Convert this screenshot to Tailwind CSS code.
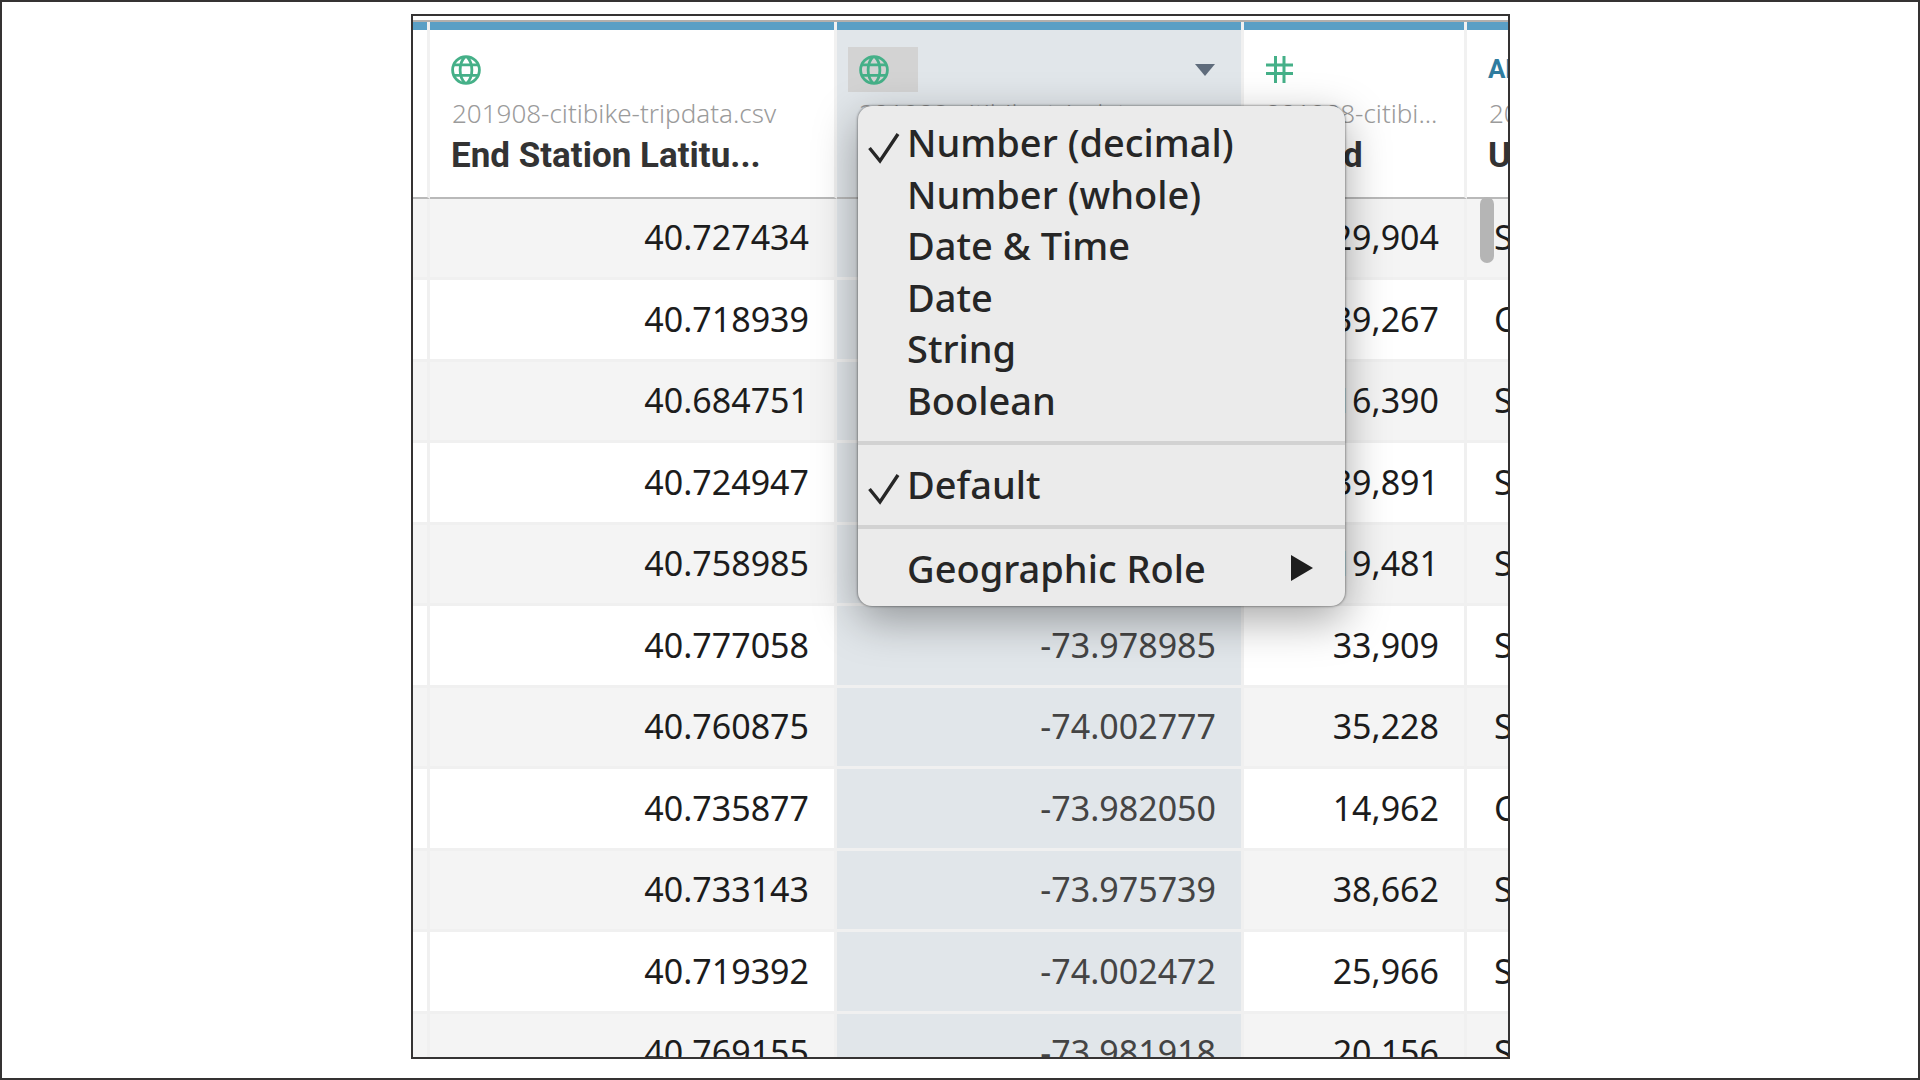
<!DOCTYPE html>
<html lang="en">
<head>
<meta charset="utf-8">
<title>Citi Bike trip data</title>
<script src="https://cdn.jsdelivr.net/npm/@tailwindcss/browser@4"></script>
</head>
<body class="bg-white font-['Noto_Sans',sans-serif] text-[#1c1c1c]">
<svg class="hidden" aria-hidden="true">
  <symbol id="globe" viewBox="0 0 30 30">
    <g fill="none" stroke="#45b088" stroke-width="2.8">
      <circle cx="15" cy="15" r="13.4"/>
      <path d="M2.5 9.800h25M2.5 20.400h25M14 2C7.500 8 7.500 22 14 28M16 2c6.500 6 6.500 20 0 26"/>
    </g>
  </symbol>
  <symbol id="check" viewBox="0 0 32 32">
    <path d="M1.500 16 12 29 30 2" fill="none" stroke="#262626" stroke-width="3.4"/>
  </symbol>
</svg>
<main class="flex h-screen justify-center border-2 border-[#353333] pt-3 pb-[19px] pl-px">
  <section class="relative w-full max-w-[1099px] overflow-hidden border-2 border-[#353333] pt-1">
    <table class="w-[1267px] table-fixed border-separate border-spacing-0 border-t-2 border-[#b3afac]">
      <colgroup>
        <col class="w-[17px]"><col class="w-[407px]"><col class="w-[407px]"><col class="w-[223px]"><col class="w-[213px]">
      </colgroup>
      <thead class="text-left [&_th]:h-[177px] [&_th]:border-b-2 [&_th]:border-b-[#b9b9b9] [&_th]:p-0 [&_th]:align-top">
        <tr>
          <td class="border-r-3 border-b-2 border-r-[#f1f1f1] border-b-[#b9b9b9] p-0 align-top"><div class="h-2 bg-[#5a9fc5]"></div></td>
          <th scope="col" class="border-r-3 border-r-[#f1f1f1]">
            <div class="h-2 bg-[#5a9fc5]"></div>
            <div class="mt-[17px] flex h-[45px] items-center pl-[21px]"><svg class="size-[30px]"><use href="#globe"/></svg></div>
            <div class="mt-1.5 pl-[22px] text-[26px] leading-[30px] font-light text-[#9b9b9b]">201908-citibike-tripdata.csv</div>
            <div class="mt-2 pl-[21px] font-['Roboto',sans-serif] text-[35px] leading-[40px] font-bold text-[#333]">End Station Latitu...</div>
          </th>
          <th scope="col" class="border-r-3 border-r-[#f1f1f1] bg-[#e1e6ea]">
            <div class="h-2 bg-[#5a9fc5]"></div>
            <div class="mt-[17px] flex h-[45px] items-center justify-between pr-[26px] pl-[11px]">
              <button type="button" aria-label="Change data type" class="flex h-[45px] w-[70px] items-center bg-[#d3d3d3] pl-[11px]"><svg class="size-[30px]"><use href="#globe"/></svg></button>
              <button type="button" aria-label="Column menu"><svg class="h-3 w-5" viewBox="0 0 20 12"><path d="M0 0h20L10 12z" fill="#5f6c7c"/></svg></button>
            </div>
            <div class="mt-1.5 pl-[22px] text-[26px] leading-[30px] font-light text-[#9b9b9b]">201908-citibike-tripdata.csv</div>
          </th>
          <th scope="col" class="border-r-3 border-r-[#f1f1f1]">
            <div class="h-2 bg-[#5a9fc5]"></div>
            <div class="mt-[17px] flex h-[45px] items-center pl-[22px]"><svg class="size-7" viewBox="0 0 28 28"><path d="M9.500 0v27M18 0v27M0 9h27M0 17.500h27" stroke="#45b088" stroke-width="3"/></svg></div>
            <div class="mt-1.5 pl-[22px] text-[26px] leading-[30px] font-light text-[#9b9b9b]">201908-citibi...</div>
            <div class="mt-2 pl-[21px] font-['Roboto',sans-serif] text-[35px] leading-[40px] font-bold text-[#333]">Bikeid</div>
          </th>
          <th scope="col">
            <div class="h-2 bg-[#5a9fc5]"></div>
            <div class="mt-[17px] flex h-[45px] items-center pl-[21px] font-['Roboto',sans-serif] text-[26px] font-bold text-[#2f7c9f]">Abc</div>
            <div class="mt-1.5 pl-[22px] text-[26px] leading-[30px] font-light text-[#9b9b9b]">201908-c...</div>
            <div class="mt-2 pl-[21px] font-['Roboto',sans-serif] text-[35px] leading-[40px] font-bold text-[#333]">Usertype</div>
          </th>
        </tr>
      </thead>
      <tbody class="text-right text-[34px] leading-[40px] [&_td]:border-r-3 [&_td]:border-b-3 [&_td]:border-[#f0f0f0] [&_td]:p-0 [&_td]:pr-[25px] [&_td]:pb-0.5 [&_td:first-child]:pr-0 [&_td:last-child]:pl-[27px] [&_td:last-child]:text-left [&_td:nth-child(3)]:bg-[#e1e6ea] [&_td:nth-child(3)]:text-[#444] [&_tr:nth-child(even)]:h-[82px] [&_tr:nth-child(odd)]:h-[81px] [&_tr:nth-child(odd)]:bg-[#f4f4f4]">
        <tr><td></td><td>40.727434</td><td></td><td>29,904</td><td>Subscriber</td></tr>
        <tr><td></td><td>40.718939</td><td></td><td>39,267</td><td>Customer</td></tr>
        <tr><td></td><td>40.684751</td><td></td><td>16,390</td><td>Subscriber</td></tr>
        <tr><td></td><td>40.724947</td><td></td><td>39,891</td><td>Subscriber</td></tr>
        <tr><td></td><td>40.758985</td><td></td><td>19,481</td><td>Subscriber</td></tr>
        <tr><td></td><td>40.777058</td><td>-73.978985</td><td>33,909</td><td>Subscriber</td></tr>
        <tr><td></td><td>40.760875</td><td>-74.002777</td><td>35,228</td><td>Subscriber</td></tr>
        <tr><td></td><td>40.735877</td><td>-73.982050</td><td>14,962</td><td>Customer</td></tr>
        <tr><td></td><td>40.733143</td><td>-73.975739</td><td>38,662</td><td>Subscriber</td></tr>
        <tr><td></td><td>40.719392</td><td>-74.002472</td><td>25,966</td><td>Subscriber</td></tr>
        <tr><td></td><td>40.769155</td><td>-73.981918</td><td>20,156</td><td>Subscriber</td></tr>
      </tbody>
    </table>

    <!-- scroll thumb -->
    <div class="absolute top-[181px] right-3.5 h-[66px] w-3.5 rounded-full bg-[#b5b5b5]"></div>

    <!-- data type menu -->
    <div role="menu" class="absolute top-[90px] left-[445px] w-[487px] rounded-[14px] bg-[#ebebeb] pt-[11px] pb-3 text-[38px] leading-[51px] font-medium text-[#262626] shadow-[0_0_2px_1px_rgba(0,0,0,0.3),0_14px_44px_rgba(0,0,0,0.35)] [&_button]:flex [&_button]:w-full [&_button]:items-center [&_button]:pr-8 [&_button]:pl-[49px]">
      <div class="[&_button:nth-child(even)]:h-[52px] [&_button:nth-child(odd)]:h-[51px]">
        <button type="button" role="menuitemradio" aria-checked="true" class="relative"><svg class="absolute top-[15px] left-2.5 size-8"><use href="#check"/></svg>Number (decimal)</button>
        <button type="button" role="menuitemradio" aria-checked="false">Number (whole)</button>
        <button type="button" role="menuitemradio" aria-checked="false">Date &amp; Time</button>
        <button type="button" role="menuitemradio" aria-checked="false">Date</button>
        <button type="button" role="menuitemradio" aria-checked="false">String</button>
        <button type="button" role="menuitemradio" aria-checked="false">Boolean</button>
      </div>
      <div class="mt-[15px] mb-[13px] h-1 bg-[#d2d2d2]"></div>
      <button type="button" role="menuitemradio" aria-checked="true" class="relative h-[52px]"><svg class="absolute top-[15px] left-2.5 size-8"><use href="#check"/></svg>Default</button>
      <div class="mt-[15px] mb-[13px] h-1 bg-[#d2d2d2]"></div>
      <button type="button" role="menuitem" aria-haspopup="true" class="h-[52px] justify-between">Geographic Role<svg class="h-[26px] w-[22px]" viewBox="0 0 22 26"><path d="M0 0 22 13 0 26z" fill="#1e1e1e"/></svg></button>
    </div>
  </section>
</main>
</body>
</html>
